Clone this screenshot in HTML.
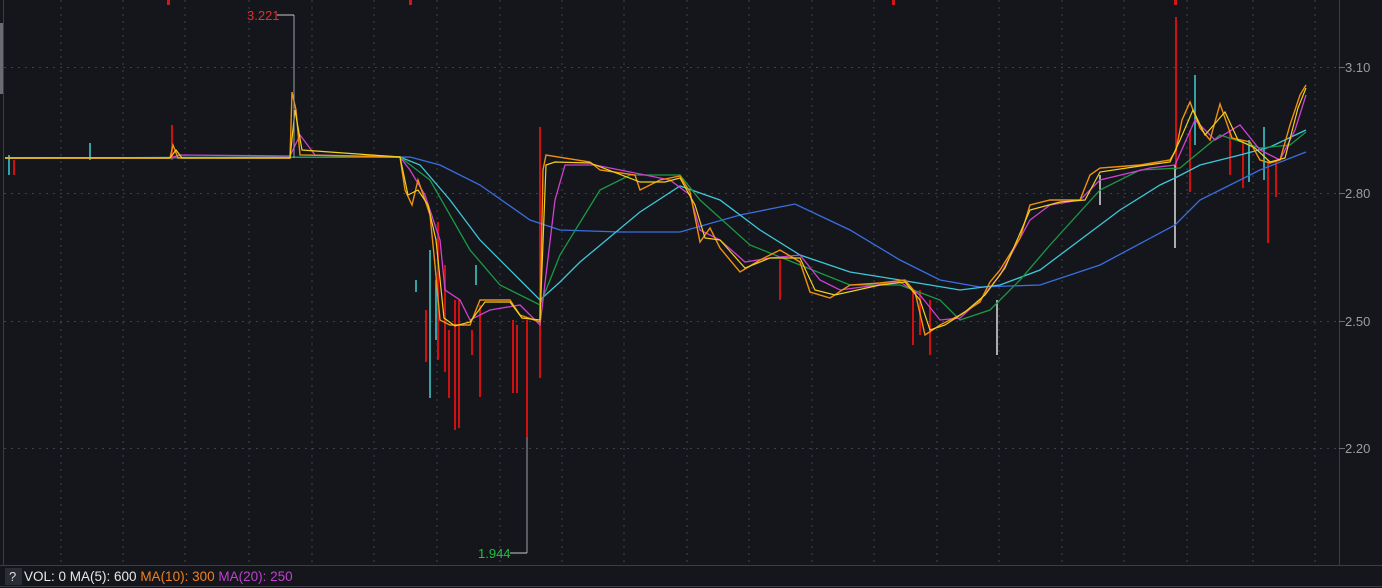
<!DOCTYPE html>
<html><head><meta charset="utf-8"><style>
html,body{margin:0;padding:0;background:#14161b;width:1382px;height:588px;overflow:hidden}
svg{display:block}
text{font-family:"Liberation Sans",sans-serif}
</style></head><body>
<svg width="1382" height="588" viewBox="0 0 1382 588" xmlns="http://www.w3.org/2000/svg">
<rect width="1382" height="588" fill="#14161b"/>
<rect x="0" y="23" width="3" height="71" fill="#6a6c73"/>
<line x1="3.5" y1="0" x2="3.5" y2="565" stroke="#3a3d44"/>
<line x1="1339.5" y1="0" x2="1339.5" y2="565" stroke="#3a3d44"/>
<g stroke="#3e4148" stroke-dasharray="2,5" stroke-width="1">
<line x1="61" y1="0" x2="61" y2="565"/><line x1="123" y1="0" x2="123" y2="565"/><line x1="185" y1="0" x2="185" y2="565"/><line x1="249" y1="0" x2="249" y2="565"/><line x1="312" y1="0" x2="312" y2="565"/><line x1="374" y1="0" x2="374" y2="565"/><line x1="437" y1="0" x2="437" y2="565"/><line x1="500" y1="0" x2="500" y2="565"/><line x1="562" y1="0" x2="562" y2="565"/><line x1="624" y1="0" x2="624" y2="565"/><line x1="687" y1="0" x2="687" y2="565"/><line x1="749" y1="0" x2="749" y2="565"/><line x1="812" y1="0" x2="812" y2="565"/><line x1="874" y1="0" x2="874" y2="565"/><line x1="937" y1="0" x2="937" y2="565"/><line x1="999" y1="0" x2="999" y2="565"/><line x1="1062" y1="0" x2="1062" y2="565"/><line x1="1124" y1="0" x2="1124" y2="565"/><line x1="1187" y1="0" x2="1187" y2="565"/><line x1="1253" y1="0" x2="1253" y2="565"/><line x1="1315" y1="0" x2="1315" y2="565"/>
<line x1="4" y1="67.5" x2="1339" y2="67.5"/><line x1="4" y1="193.5" x2="1339" y2="193.5"/><line x1="4" y1="321.5" x2="1339" y2="321.5"/><line x1="4" y1="448.5" x2="1339" y2="448.5"/>
</g>
<g stroke="#6a6c73"><line x1="1339" y1="67.5" x2="1345" y2="67.5"/><line x1="1339" y1="193.5" x2="1345" y2="193.5"/><line x1="1339" y1="321.5" x2="1345" y2="321.5"/><line x1="1339" y1="448.5" x2="1345" y2="448.5"/></g>
<g fill="#9a9ca2" font-size="13"><text x="1345" y="72">3.10</text><text x="1345" y="198">2.80</text><text x="1345" y="326">2.50</text><text x="1345" y="453">2.20</text></g>
<g fill="#d01818"><rect x="167" y="0" width="3" height="5"/><rect x="409" y="0" width="3" height="5"/><rect x="892" y="0" width="3" height="5"/><rect x="1174" y="0" width="3" height="5"/></g>
<g stroke="#d01010" stroke-width="2">
<line x1="14" y1="160" x2="14" y2="175"/><line x1="172" y1="125" x2="172" y2="160"/>
<line x1="426" y1="310" x2="426" y2="362"/><line x1="438" y1="222" x2="438" y2="360"/><line x1="445" y1="265" x2="445" y2="372"/><line x1="449" y1="330" x2="449" y2="398"/><line x1="455" y1="300" x2="455" y2="430"/><line x1="459" y1="300" x2="459" y2="428"/><line x1="480" y1="305" x2="480" y2="397"/><line x1="472" y1="330" x2="472" y2="355"/><line x1="513" y1="320" x2="513" y2="393"/><line x1="517" y1="325" x2="517" y2="393"/><line x1="527" y1="320" x2="527" y2="437"/><line x1="540" y1="127" x2="540" y2="378"/>
<line x1="780" y1="260" x2="780" y2="300"/><line x1="913" y1="290" x2="913" y2="345"/><line x1="920" y1="290" x2="920" y2="335"/><line x1="930" y1="300" x2="930" y2="355"/><line x1="1176" y1="17" x2="1176" y2="170"/><line x1="1190" y1="130" x2="1190" y2="192"/><line x1="1230" y1="130" x2="1230" y2="175"/><line x1="1243" y1="140" x2="1243" y2="188"/><line x1="1268" y1="160" x2="1268" y2="243"/><line x1="1276" y1="160" x2="1276" y2="197"/>
</g>
<g stroke="#3ed0d0" stroke-width="1.5">
<line x1="9" y1="155" x2="9" y2="175"/><line x1="90" y1="143" x2="90" y2="160"/><line x1="430" y1="250" x2="430" y2="398"/><line x1="436" y1="280" x2="436" y2="340"/><line x1="416" y1="280" x2="416" y2="292"/><line x1="476" y1="265" x2="476" y2="285"/><line x1="1195" y1="75" x2="1195" y2="145"/><line x1="1249" y1="140" x2="1249" y2="182"/><line x1="1264" y1="127" x2="1264" y2="180"/>
</g>
<g stroke="#ddd" stroke-width="1.5"><line x1="1175" y1="165" x2="1175" y2="248"/><line x1="997" y1="300" x2="997" y2="355"/><line x1="1100" y1="175" x2="1100" y2="205"/></g>
<polyline fill="none" stroke="#3a6ee0" stroke-width="1.3" points="5,158 410,157 440,165 480,185 530,220 560,230 620,232 680,232 740,215 795,204 850,230 900,260 940,280 980,287 1040,285 1100,265 1175,225 1200,200 1260,170 1306,152"/>
<polyline fill="none" stroke="#3ec8d8" stroke-width="1.3" points="5,158 400,157 420,165 450,200 480,240 520,280 540,300 560,282 580,262 640,212 680,186 720,200 760,230 800,255 850,272 900,280 960,290 1000,285 1040,270 1080,240 1120,210 1160,185 1175,178 1200,165 1240,155 1270,147 1306,130"/>
<polyline fill="none" stroke="#1a9a45" stroke-width="1.3" points="5,158 400,157 430,180 470,250 500,285 540,305 560,255 600,190 630,175 680,175 700,200 750,245 800,265 850,285 900,285 940,300 960,320 990,310 1020,280 1050,245 1100,190 1140,170 1180,168 1220,135 1260,148 1290,145 1306,132"/>
<polyline fill="none" stroke="#d040d0" stroke-width="1.3" points="5,158 170,158 180,155 290,156 300,135 315,155 400,157 410,170 425,195 440,240 445,290 460,300 470,320 490,310 520,305 540,325 555,200 565,165 595,165 630,172 670,180 690,195 700,230 720,240 745,262 770,258 800,255 820,280 840,290 900,282 920,295 940,320 960,318 980,300 1000,275 1030,220 1050,205 1080,200 1100,180 1150,168 1175,165 1195,120 1215,140 1240,125 1260,150 1280,160 1295,130 1306,95"/>
<polyline fill="none" stroke="#f09010" stroke-width="1.4" points="5,158 170,158 173,145 178,158 290,158 292,92 296,110 300,155 400,157 405,190 412,205 418,180 425,200 430,215 435,265 440,320 450,325 470,325 480,300 510,300 520,315 540,322 543,170 546,155 590,162 600,170 635,175 640,190 660,180 680,176 690,192 700,242 710,228 720,248 740,272 760,260 780,250 800,262 810,292 830,298 850,285 880,283 905,280 915,292 925,335 940,325 960,315 980,302 990,282 1000,270 1020,238 1030,205 1050,200 1080,200 1090,175 1100,168 1140,165 1170,160 1176,150 1182,120 1190,102 1200,128 1210,140 1220,104 1232,138 1250,142 1260,160 1270,163 1280,160 1290,125 1300,95 1306,85"/>
<polyline fill="none" stroke="#f0d020" stroke-width="1.2" points="5,158 170,158 176,150 182,158 290,158 295,110 302,150 400,157 408,195 418,190 428,205 436,240 444,318 455,326 470,322 485,302 510,302 522,318 540,320 546,165 555,162 590,163 640,182 665,182 680,178 695,205 705,238 720,240 745,268 770,258 800,258 815,290 835,295 880,285 905,282 920,300 930,330 945,325 965,312 985,295 1005,268 1030,210 1060,202 1085,200 1100,172 1140,166 1170,162 1180,140 1193,110 1205,135 1225,112 1238,140 1255,148 1270,162 1285,158 1298,108 1306,88"/>
<line x1="294" y1="15" x2="294" y2="158" stroke="#9aa0a8"/>
<line x1="277" y1="15" x2="294" y2="15" stroke="#c8c8c8"/>
<text x="247" y="20" fill="#e03030" font-size="13">3.221</text>
<line x1="527" y1="437" x2="527" y2="553" stroke="#9aa0a8"/>
<line x1="510" y1="553" x2="527" y2="553" stroke="#c8c8c8"/>
<text x="478" y="558" fill="#20c040" font-size="13">1.944</text>
<line x1="0" y1="565.5" x2="1382" y2="565.5" stroke="#3a3d44"/>
<line x1="0" y1="586.5" x2="1382" y2="586.5" stroke="#3a3d44"/>
<rect x="5" y="568" width="17" height="17" fill="#2a2d33"/>
<text x="9" y="581" fill="#ddd" font-size="13">?</text>
<text x="24" y="581" font-size="13.5"><tspan fill="#e8e8e8">VOL: 0  MA(5): 600 </tspan><tspan fill="#f08020"> MA(10): 300 </tspan><tspan fill="#c040d0"> MA(20): 250</tspan></text>
</svg>
</body></html>
